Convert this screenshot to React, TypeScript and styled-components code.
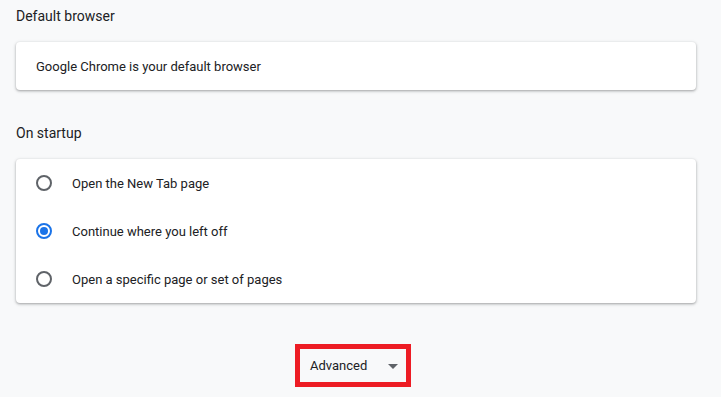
import React from 'react';
import styled, { createGlobalStyle } from 'styled-components';

const GlobalStyle = createGlobalStyle`
  body {
    margin: 0;
    background: #f8f9fa;
    font-family: Roboto, "Liberation Sans", Arial, sans-serif;
    color: #202124;
  }
`;

const Page = styled.div`
  padding: 0 25px 0 16px;
  height: 397px;
  box-sizing: border-box;
`;

const Heading = styled.div<{ first?: boolean }>`
  font-size: 14px;
  line-height: 20px;
  padding: ${({ first }) => (first ? '6px' : '33px')} 0 16px;
  color: #202124;
`;

const Card = styled.div`
  background: #ffffff;
  border-radius: 4px;
  box-shadow: 0 1px 2px rgba(60, 64, 67, 0.3), 0 1px 3px 1px rgba(60, 64, 67, 0.15);
`;

const Row = styled.div`
  display: flex;
  align-items: center;
  height: 48px;
  padding: 0 20px;
  font-size: 13px;
`;

const Radio = styled.span<{ checked?: boolean }>`
  width: 16px;
  height: 16px;
  box-sizing: border-box;
  border-radius: 50%;
  border: 2px solid ${({ checked }) => (checked ? '#1a73e8' : '#5f6368')};
  display: flex;
  align-items: center;
  justify-content: center;
  margin-right: 20px;
  &::after {
    content: '';
    width: 8px;
    height: 8px;
    border-radius: 50%;
    background: ${({ checked }) => (checked ? '#1a73e8' : 'transparent')};
  }
`;

const Footer = styled.div`
  display: flex;
  justify-content: center;
  padding: 41px 6px 0 0;
`;

const Highlight = styled.div`
  border: 5px solid #ed1c24;
  width: 116px;
  height: 43px;
  box-sizing: border-box;
  display: flex;
  align-items: center;
  justify-content: space-between;
  padding: 0 8px 0 10px;
`;

const AdvancedLabel = styled.span`
  font-size: 13px;
  color: #202124;
`;

const Caret = styled.span`
  width: 0;
  height: 0;
  border-left: 5px solid transparent;
  border-right: 5px solid transparent;
  border-top: 5px solid #5f6368;
  margin-top: 2px;
`;

const options = [
  { label: 'Open the New Tab page', checked: false },
  { label: 'Continue where you left off', checked: true },
  { label: 'Open a specific page or set of pages', checked: false },
];

export default function App() {
  return (
    <>
      <GlobalStyle />
      <Page>
        <Heading first>Default browser</Heading>
        <Card>
          <Row>Google Chrome is your default browser</Row>
        </Card>
        <Heading>On startup</Heading>
        <Card>
          {options.map((o) => (
            <Row key={o.label}>
              <Radio checked={o.checked} />
              {o.label}
            </Row>
          ))}
        </Card>
        <Footer>
          <Highlight>
            <AdvancedLabel>Advanced</AdvancedLabel>
            <Caret />
          </Highlight>
        </Footer>
      </Page>
    </>
  );
}
